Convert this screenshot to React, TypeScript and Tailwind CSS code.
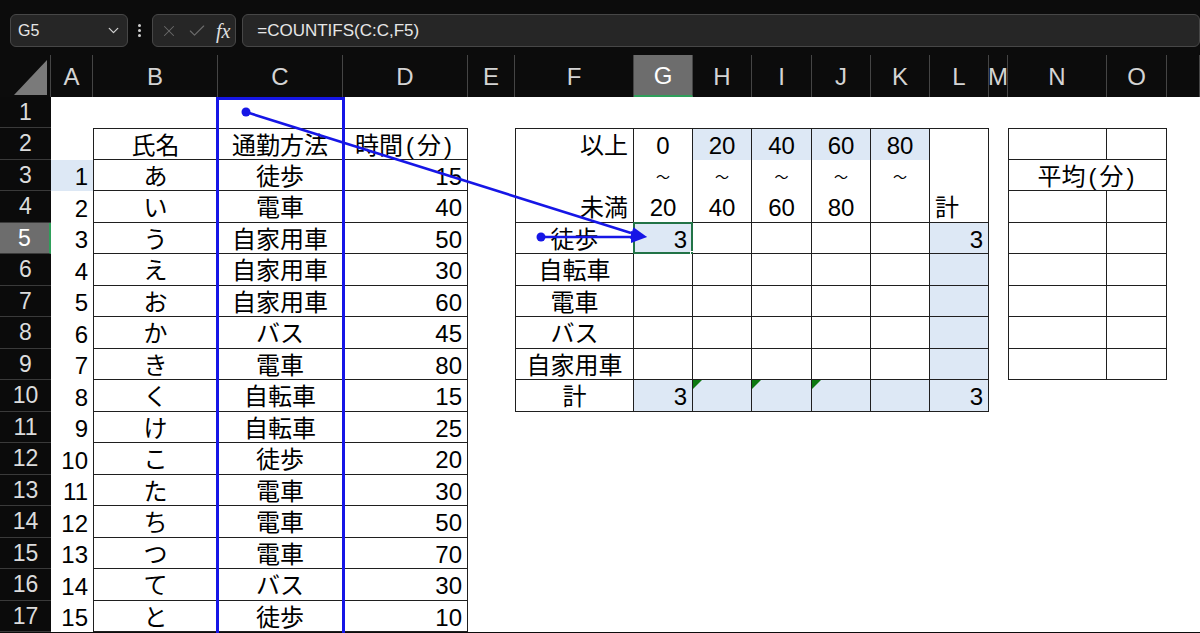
import type { ReactNode } from "react";
import clsx from "clsx";
import { Check, ChevronDown, X } from "lucide-react";

const GRID =
  "grid grid-cols-[51px_42px_125px_125px_125px_47px_119px_59px_59px_60px_59px_59px_59px_19px_99px_60px_1fr] grid-rows-[100%]";

const COLS = ["A", "B", "C", "D", "E", "F", "G", "H", "I", "J", "K", "L", "M", "N", "O", ""];

const people: [string, string, number][] = [
  ["あ", "徒歩", 15],
  ["い", "電車", 40],
  ["う", "自家用車", 50],
  ["え", "自家用車", 30],
  ["お", "自家用車", 60],
  ["か", "バス", 45],
  ["き", "電車", 80],
  ["く", "自転車", 15],
  ["け", "自転車", 25],
  ["こ", "徒歩", 20],
  ["た", "電車", 30],
  ["ち", "電車", 50],
  ["つ", "電車", 70],
  ["て", "バス", 30],
  ["と", "徒歩", 10],
];

const methods = ["徒歩", "自転車", "電車", "バス", "自家用車"];

type Spec = {
  text?: ReactNode;
  align?: "l" | "c" | "r";
  fill?: boolean;
  t?: boolean;
  r?: boolean;
  b?: boolean;
  l?: boolean;
  tri?: boolean;
  sel?: boolean;
  small?: boolean;
  span?: boolean;
};

// 括弧まわりの余白（Excelの表示に寄せる）
function Paren({ head, inner }: { head: string; inner: string }) {
  return (
    <span>
      {head}
      <span className="mx-[3px]">(</span>
      {inner}
      <span className="mx-[3px]">)</span>
    </span>
  );
}

function spec(row: number, col: number): Spec {
  // A列の番号
  if (col === 0 && row >= 3) return { text: row - 2, align: "r", fill: row === 3 };

  // 左の名簿 B2:D17
  if (col >= 1 && col <= 3 && row >= 2) {
    const s: Spec = { r: true, b: true, l: col === 1, t: row === 2, align: "c" };
    if (row === 2) {
      s.text = col === 1 ? "氏名" : col === 2 ? "通勤方法" : <Paren head="時間" inner="分" />;
    } else {
      const p = people[row - 3];
      s.text = p[col - 1];
      if (col === 3) s.align = "r";
    }
    return s;
  }

  // 集計表 F2:L10
  if (col >= 5 && col <= 11 && row >= 2 && row <= 10) {
    const s: Spec = { r: true, l: col === 5, t: row === 2, b: row >= 4, align: "c" };
    const bins = ["0", "20", "40", "60", "80"];
    if (row === 2) {
      if (col === 5) Object.assign(s, { text: "以上", align: "r" });
      if (col >= 6 && col <= 10) s.text = bins[col - 6];
      if (col >= 7 && col <= 10) s.fill = true;
    } else if (row === 3) {
      if (col >= 6 && col <= 10) Object.assign(s, { text: "～", small: true });
    } else if (row === 4) {
      if (col === 5) Object.assign(s, { text: "未満", align: "r" });
      if (col >= 6 && col <= 9) s.text = bins[col - 5];
      if (col === 11) Object.assign(s, { text: "計", align: "l" });
    } else {
      if (col === 5) s.text = row === 10 ? "計" : methods[row - 5];
      if (col === 11) s.fill = true;
      if (row === 5 && col === 6) Object.assign(s, { text: 3, align: "r", fill: true, sel: true });
      if ((row === 5 || row === 10) && col === 11) Object.assign(s, { text: 3, align: "r" });
      if (row === 10 && col >= 6 && col <= 10) s.fill = true;
      if (row === 10 && col === 6) Object.assign(s, { text: 3, align: "r" });
      if (row === 10 && col >= 7 && col <= 9) s.tri = true;
    }
    return s;
  }

  // 平均表 N2:O9
  if (col >= 13 && col <= 14 && row >= 2 && row <= 9) {
    if (row === 3 && col === 13)
      return { r: true, b: true, l: true, span: true, align: "c", text: <Paren head="平均" inner="分" /> };
    return { r: true, b: true, l: col === 13, t: row === 2 };
  }
  return {};
}

function Cell({ s }: { s: Spec }) {
  return (
    <div
      className={clsx(
        "relative flex min-h-0 items-center whitespace-nowrap border-solid border-[#1f1f1f] px-[5px] pt-[3px] leading-none text-black",
        s.small ? "text-[14px]" : "text-[24px]",
        s.fill ? "bg-[#dde8f5]" : "bg-white",
        s.align === "r" && "justify-end",
        s.align === "c" && "justify-center",
        s.t && "border-t-[1px]",
        s.r && "border-r-[1px]",
        s.b && "border-b-[1px]",
        s.l && "border-l-[1px]",
        s.span && "col-span-2"
      )}
    >
      {s.text}
      {s.tri && (
        <div className="absolute left-0 top-0 h-0 w-0 border-r-[9px] border-t-[9px] border-r-transparent border-t-[#0e7a12]" />
      )}
      {s.sel && (
        <>
          <div className="absolute inset-[-1px] border-2 border-[#217346]" />
          <div className="absolute bottom-[-4px] right-[-4px] h-[6px] w-[6px] border border-white bg-[#217346]" />
        </>
      )}
    </div>
  );
}

function FormulaBar() {
  return (
    <div className="flex h-[55px] items-start pl-[10px] pt-[14px] font-['Liberation_Sans',sans-serif]">
      <div className="flex h-[33px] w-[120px] items-center justify-between rounded-[6px] border border-[#474747] bg-[#262626] pl-[7px] pr-[5px]">
        <span className="text-[16px] text-[#e6e6e6]">G5</span>
        <ChevronDown size={17} strokeWidth={1.8} className="text-[#d0d0d0]" />
      </div>
      <div className="flex h-[33px] w-[25px] flex-col items-center justify-center gap-[2px]">
        <div className="h-[3px] w-[3px] rounded-full bg-[#cfcfcf]" />
        <div className="h-[3px] w-[3px] rounded-full bg-[#cfcfcf]" />
        <div className="h-[3px] w-[3px] rounded-full bg-[#cfcfcf]" />
      </div>
      <div className="flex h-[33px] w-[86px] items-center rounded-[6px] border border-[#474747] bg-[#262626] pl-[7px]">
        <X size={18} strokeWidth={1.4} className="text-[#6b6b6b]" />
        <Check size={20} strokeWidth={1.4} className="ml-[9px] text-[#6b6b6b]" />
        <span className="ml-[9px] font-['Liberation_Serif',serif] text-[20px] italic leading-none text-[#e0e0e0]">
          fx
        </span>
      </div>
      <div className="ml-[6px] flex h-[33px] w-[980px] items-center rounded-[6px] border border-[#474747] bg-[#262626] pl-[14px] text-[17px] text-[#e6e6e6]">
        =COUNTIFS(C:C,F5)
      </div>
    </div>
  );
}

function ColumnHeaders() {
  return (
    <div className={clsx(GRID, "h-[42px] font-['Liberation_Sans',sans-serif] leading-none")}>
      <div className="relative border-r border-[#454545]">
        <svg width="51" height="42" className="absolute left-0 top-0">
          <polygon points="14,40 47,40 47,5" fill="#7a7a7a" />
        </svg>
      </div>
      {COLS.map((c, i) => (
        <div
          key={i}
          className={clsx(
            "flex items-center justify-center border-r border-[#454545] pt-[2px] text-[24px]",
            c === "G" ? "border-b-2 border-b-[#2f9e5a] bg-[#6d6d6d] text-white" : "text-[#d4d4d4]"
          )}
        >
          {c}
        </div>
      ))}
    </div>
  );
}

function Sheet() {
  const rows = Array.from({ length: 17 }, (_, i) => i + 1);
  return (
    <div className="font-['Liberation_Sans','Noto_Sans_CJK_JP',sans-serif]">
      {rows.map((r) => {
        const cells: ReactNode[] = [];
        for (let c = 0; c < 16; c++) {
          const s = spec(r, c);
          cells.push(<Cell key={c} s={s} />);
          if (s.span) c++;
        }
        return (
          <div key={r} className={clsx(GRID, r % 2 === 1 ? "h-[31px]" : "h-[32px]")}>
            <div
              className={clsx(
                "flex min-h-0 items-center justify-center border-b-[1px] border-solid border-[#3a3a3a] text-[23px] leading-none",
                r === 5 ? "border-r-2 border-r-[#2f9e5a] bg-[#6d6d6d] text-white" : "bg-[#0b0b0b] text-[#dcdcdc]"
              )}
            >
              {r}
            </div>
            {cells}
          </div>
        );
      })}
    </div>
  );
}

function TraceArrows() {
  const blue = "#1616e6";
  return (
    <>
      <div className="pointer-events-none absolute left-[216px] top-[97px] h-[540px] w-[129px] border-[3px] border-[#1616e6]" />
      <svg className="pointer-events-none absolute left-0 top-0" width="1200" height="633">
        <circle cx="246" cy="112" r="4.5" fill={blue} />
        <line x1="246" y1="112" x2="631" y2="233" stroke={blue} strokeWidth="2.6" />
        <polygon points="647,237 629.9,238.7 633.5,227.2" fill={blue} />
        <circle cx="541" cy="237" r="4.5" fill={blue} />
        <line x1="541" y1="237" x2="632" y2="237" stroke={blue} strokeWidth="2.6" />
        <polygon points="647,237 631,231 631,243" fill={blue} />
      </svg>
    </>
  );
}

export default function App() {
  return (
    <div className="relative h-[633px] w-[1200px] overflow-hidden bg-[#0c0c0c]">
      <FormulaBar />
      <ColumnHeaders />
      <Sheet />
      <TraceArrows />
    </div>
  );
}
